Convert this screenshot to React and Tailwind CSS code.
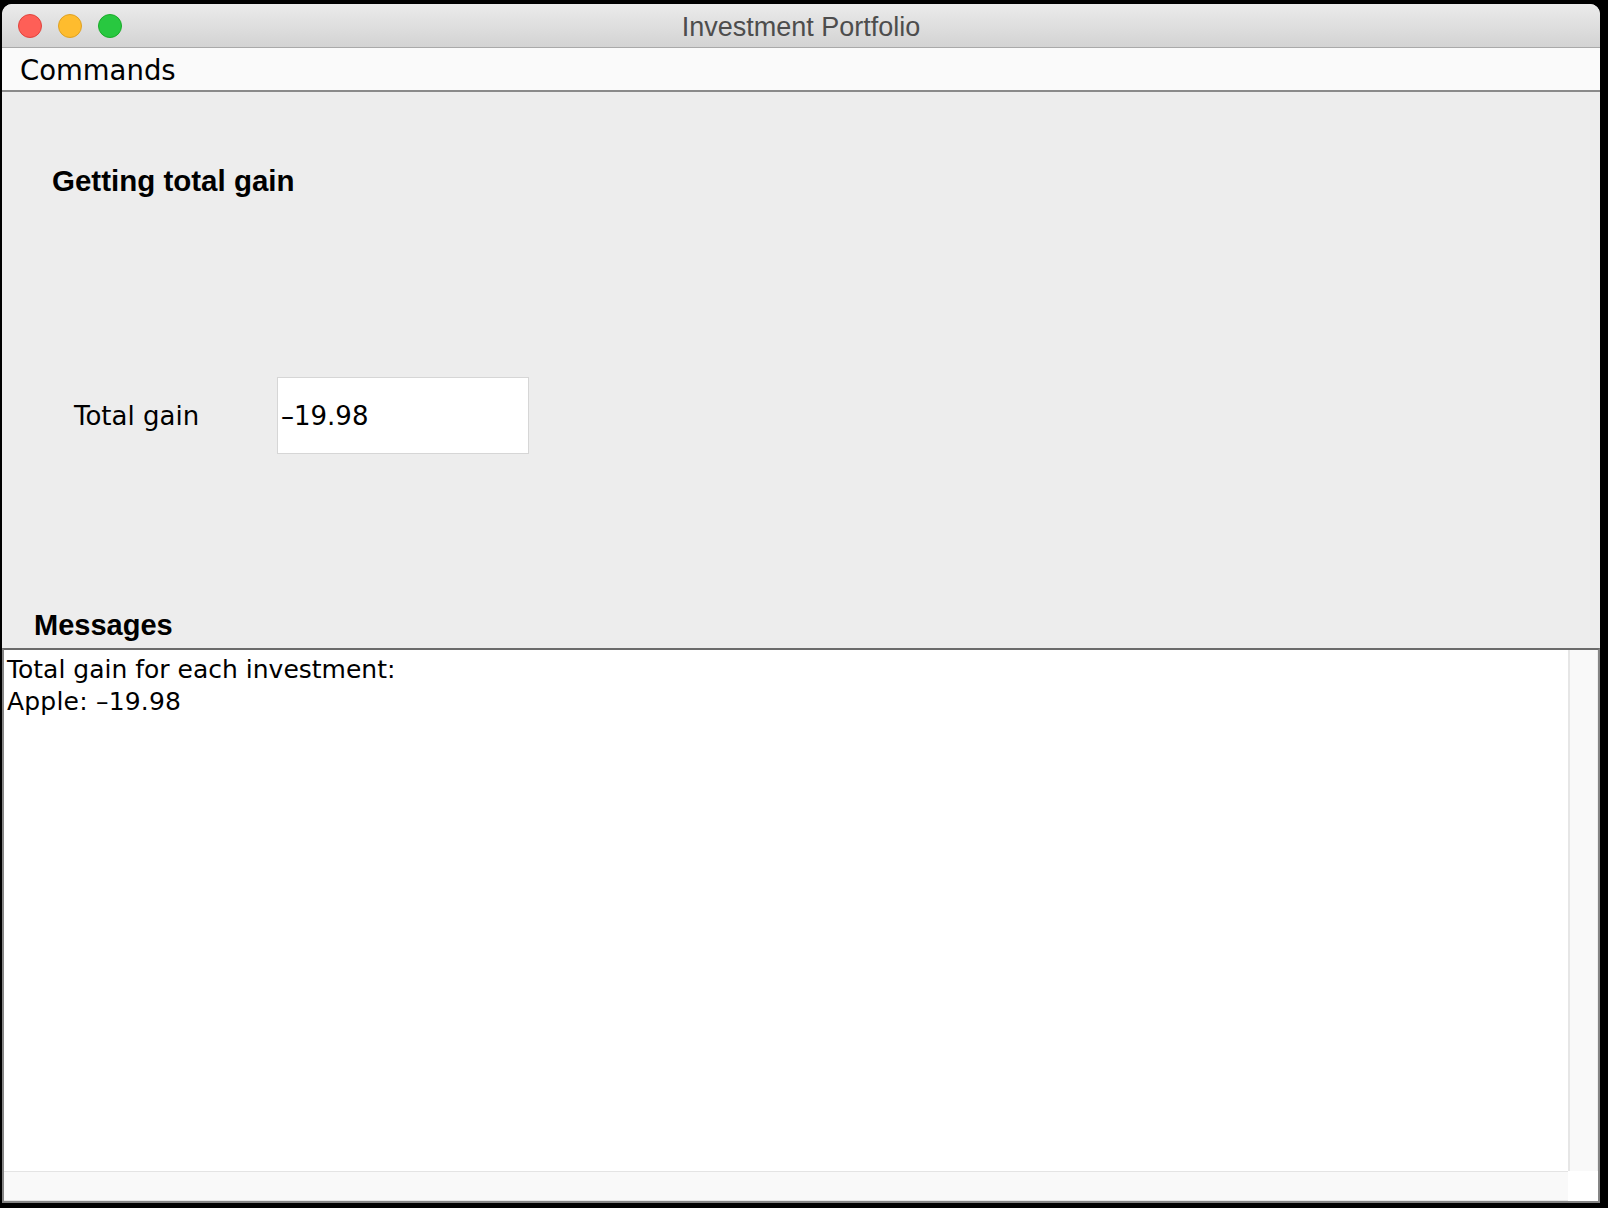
import React from 'react';

// Fenster-Titelleiste mit den drei Ampel-Knöpfen
const TitleBar = () => {
  return (
    <div className='relative h-[44px] shrink-0 flex items-center justify-center pt-[3px] bg-gradient-to-b from-[#ebebeb] to-[#d3d3d3] border-b border-[#a9a9a9]'>
      <div className='absolute left-[16px] top-[10px] flex gap-[16px]'>
        <span className='w-[24px] h-[24px] rounded-full bg-[#fe5f57] border border-[#e0443e]' />
        <span className='w-[24px] h-[24px] rounded-full bg-[#febc2e] border border-[#dea123]' />
        <span className='w-[24px] h-[24px] rounded-full bg-[#28c840] border border-[#1aab29]' />
      </div>
      <span className='text-[27px] leading-none text-[#4d4d4d] font-["Liberation_Sans",Arial,sans-serif]'>
        Investment Portfolio
      </span>
    </div>
  );
};

const MenuBar = () => {
  return (
    <div className='h-[44px] shrink-0 flex items-center pl-[18px] pt-[3px] bg-[#fafafa] border-b-2 border-[#8a8a8a]'>
      <span className='text-[27.5px] leading-none text-black font-["DejaVu_Sans",sans-serif]'>Commands</span>
    </div>
  );
};

// Nachrichtenbereich mit Scrollbalken
const ScrollPane = () => {
  return (
    <div className='h-[555px] shrink-0 flex flex-col border-2 border-[#858585] border-t-[#6b6b6b]'>
      <div className='flex flex-1 min-h-0'>
        <div className='flex-1 bg-white pl-[3px] pt-[4px] text-[25px] leading-[32px] text-black font-["DejaVu_Sans",sans-serif]'>
          <p>Total gain for each investment:</p>
          <p className='tracking-[0.2px]'>Apple: –19.98</p>
        </div>
        <div className='w-[30px] bg-[#f9f9f9] border-l-2 border-r border-[#e6e6e6] border-r-[#ededed]' />
      </div>
      <div className='h-[30px] shrink-0 flex'>
        <div className='flex-1 bg-[#f9f9f9] border-t border-b border-[#e4e4e4]' />
        <div className='w-[30px] bg-white' />
      </div>
    </div>
  );
};

export default function App() {
  return (
    <div className='w-[1608px] h-[1208px] bg-black pt-[4px] pl-[2px] pr-[8px] pb-[5px] overflow-hidden'>
      <div className='h-full flex flex-col rounded-t-[10px] overflow-hidden bg-[#ededed]'>
        <TitleBar />
        <MenuBar />
        <main className='flex-1 flex flex-col min-h-0'>
          <h1 className='mt-[74px] ml-[50px] text-[29.5px] leading-[29px] font-bold text-black font-["Liberation_Sans",Arial,sans-serif]'>
            Getting total gain
          </h1>
          <div className='mt-[182px] h-[77px] flex items-center font-["DejaVu_Sans",sans-serif] text-[26px] text-black'>
            <label className='ml-[72px] w-[203px] pt-[1px]'>Total gain</label>
            <div className='w-[252px] h-[77px] flex items-center pl-[3px] pt-[1px] bg-white border border-[#d6d6d6]'>
              –19.98
            </div>
          </div>
          <h2 className='mt-auto mb-[9px] ml-[32px] text-[29px] leading-[28px] font-bold text-black font-["Liberation_Sans",Arial,sans-serif]'>
            Messages
          </h2>
          <ScrollPane />
        </main>
      </div>
    </div>
  );
}
